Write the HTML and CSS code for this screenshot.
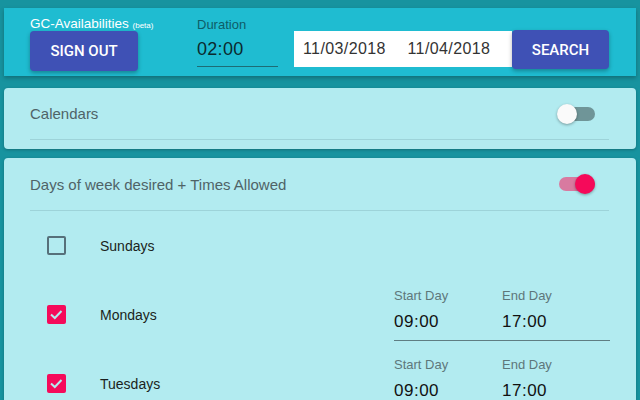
FILE: index.html
```html
<!DOCTYPE html>
<html lang="en">

<head>
    <meta charset="UTF-8">
    <meta name="viewport" content="width=device-width, initial-scale=1.0">
    <title>GC-Availabilities</title>
    <link rel="stylesheet" href="styles.css">
</head>

<body>
    <div class="top-bar">
        <div class="brand">
            <div class="brand-title">GC-Availabilities <small>(beta)</small></div>
            <button class="btn sign-out">SIGN OUT</button>
        </div>
        <div class="duration">
            <label>Duration</label>
            <div class="duration-value">02:00</div>
        </div>
        <div class="date-range">
            <span>11/03/2018</span>
            <span>11/04/2018</span>
        </div>
        <button class="btn search">SEARCH</button>
    </div>

    <div class="card">
        <div class="card-header">
            <span>Calendars</span>
            <div class="toggle"><div class="thumb"></div></div>
        </div>
    </div>

    <div class="card card-days">
        <div class="card-header">
            <span>Days of week desired + Times Allowed</span>
            <div class="toggle on"><div class="thumb"></div></div>
        </div>
        <div class="day-row">
            <span class="checkbox"></span>
            <span class="day-name">Sundays</span>
        </div>
        <div class="day-row">
            <span class="checkbox checked">
                <svg width="19" height="19" viewBox="0 0 19 19"><polyline points="4,9.5 7.8,13 14.5,6" /></svg>
            </span>
            <span class="day-name">Mondays</span>
            <div class="times">
                <div class="time-field">
                    <label>Start Day</label>
                    <div class="time-value">09:00</div>
                </div>
                <div class="time-field">
                    <label>End Day</label>
                    <div class="time-value">17:00</div>
                </div>
            </div>
        </div>
        <div class="day-row">
            <span class="checkbox checked">
                <svg width="19" height="19" viewBox="0 0 19 19"><polyline points="4,9.5 7.8,13 14.5,6" /></svg>
            </span>
            <span class="day-name">Tuesdays</span>
            <div class="times">
                <div class="time-field">
                    <label>Start Day</label>
                    <div class="time-value">09:00</div>
                </div>
                <div class="time-field">
                    <label>End Day</label>
                    <div class="time-value">17:00</div>
                </div>
            </div>
        </div>
    </div>
</body>

</html>
```

FILE: styles.css
```css
:root {
    --bg-color: #17939f;
    --header-color: #1fbcd1;
    --card-color: #b2ebf0;
    --indigo: #3f51b5;
    --pink: #f50a5a;
}

body {
    margin: 0;
    padding: 8px 4px 0;
    background-color: var(--bg-color);
    font-family: "Liberation Sans", Arial, sans-serif;
    overflow: hidden;
}

.top-bar {
    display: flex;
    align-items: flex-start;
    height: 68px;
    padding-left: 26px;
    background-color: var(--header-color);
    box-shadow: 0 2px 4px rgba(0, 0, 0, 0.25);
}

.brand {
    display: flex;
    flex-direction: column;
    width: 108px;
    padding-top: 8px;
}

.brand-title {
    height: 15px;
    color: #ffffff;
    font-size: 13.5px;
    line-height: 15px;
    white-space: nowrap;
}

.brand-title small {
    font-size: 8px;
    line-height: 1;
}

.btn {
    background-color: var(--indigo);
    color: #ffffff;
    border: none;
    border-radius: 4px;
    font-family: Roboto, "Liberation Sans", sans-serif;
    font-weight: 500;
    font-size: 15px;
    box-shadow: 0 2px 4px rgba(0, 0, 0, 0.3);
    cursor: pointer;
}

.sign-out {
    width: 108px;
    height: 40px;
}

.duration {
    width: 81px;
    margin-left: 59px;
    padding-top: 9px;
}

.duration label {
    display: block;
    color: #0e5d68;
    font-size: 13px;
    line-height: 15px;
}

.duration-value {
    color: #0b2a2e;
    font-size: 18px;
    line-height: 33px;
    padding-top: 1px;
    letter-spacing: 0.3px;
    border-bottom: 1px solid #1d6c75;
}

.date-range {
    display: flex;
    align-items: center;
    width: 209px;
    height: 36px;
    margin-top: 23px;
    margin-left: 16px;
    padding-left: 9px;
    background-color: #ffffff;
    color: #333333;
    font-size: 16px;
    letter-spacing: 0.4px;
}

.date-range span {
    width: 110px;
}

.search {
    width: 97px;
    height: 39px;
    margin-top: 22px;
}

.card {
    margin-top: 12px;
    padding: 0 27px 9px 26px;
    background-color: var(--card-color);
    border-radius: 4px;
    box-shadow: 0 1px 3px rgba(0, 0, 0, 0.25);
}

.card-days {
    margin-top: 9px;
}

.card-header {
    display: flex;
    align-items: center;
    justify-content: space-between;
    height: 51px;
    border-bottom: 1px solid #9dd3d9;
    color: #4f6367;
    font-size: 15px;
}

.card-days .card-header {
    height: 52px;
}

.toggle {
    display: flex;
    align-items: center;
    width: 36px;
    height: 14px;
    margin-right: 14px;
    border-radius: 7px;
    background-color: #6f9598;
}

.toggle .thumb {
    width: 20px;
    height: 20px;
    margin-left: -2px;
    border-radius: 50%;
    background-color: #fafafa;
    box-shadow: 0 1px 3px rgba(0, 0, 0, 0.35);
}

.toggle.on {
    justify-content: flex-end;
    background-color: #d87aa0;
}

.toggle.on .thumb {
    margin-left: 0;
    background-color: var(--pink);
}

.day-row {
    display: flex;
    align-items: center;
    height: 69px;
}

.checkbox {
    display: flex;
    width: 19px;
    height: 19px;
    margin-left: 17px;
    box-sizing: border-box;
    border: 2px solid #56707a;
    border-radius: 2px;
}

.checkbox.checked {
    border: none;
    background-color: var(--pink);
}

.checkbox svg polyline {
    fill: none;
    stroke: var(--card-color);
    stroke-width: 2;
}

.day-name {
    margin-left: 34px;
    color: #1b1f20;
    font-size: 14px;
}

.times {
    display: flex;
    align-self: flex-start;
    width: 216px;
    margin-left: auto;
    margin-right: -1px;
    padding-top: 8px;
    padding-bottom: 8px;
    border-bottom: 1px solid #5f7d82;
}

.time-field {
    width: 108px;
}

.time-field label {
    display: block;
    color: #5e777b;
    font-size: 13px;
    line-height: 15px;
}

.time-value {
    margin-top: 9px;
    color: #111111;
    font-size: 17px;
    line-height: 20px;
    letter-spacing: 0.5px;
}
```
